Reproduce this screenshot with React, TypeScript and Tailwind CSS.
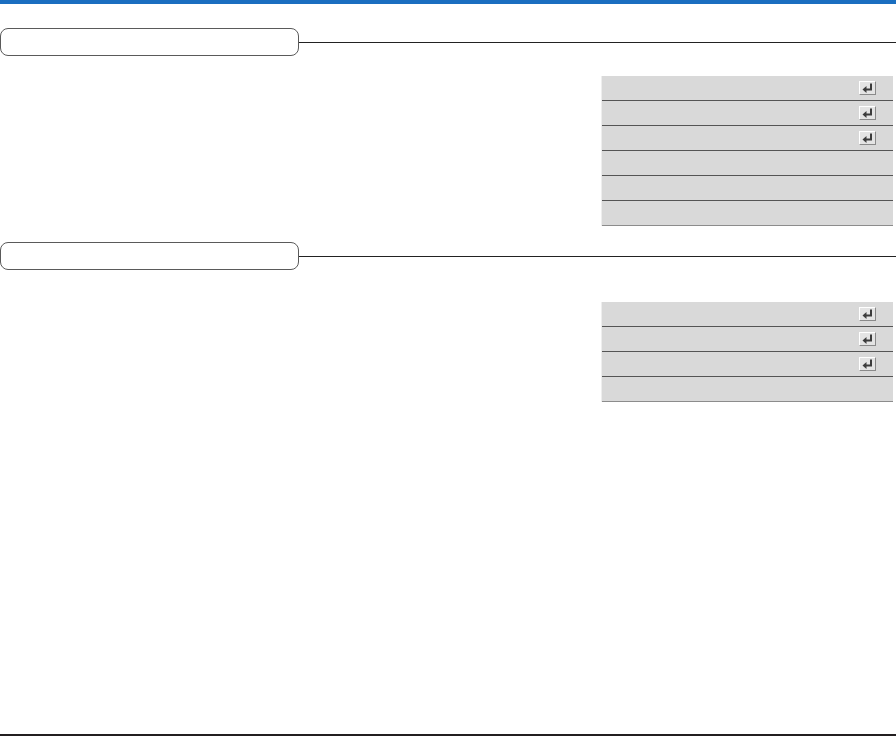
import React from "react";

function EnterIcon() {
  return (
    <div className="w-[17px] h-[14px] bg-[#e4e4e4] border-t border-l border-t-white border-l-white border-b border-r border-b-[#8a8a8a] border-r-[#8a8a8a] flex items-center justify-center">
      <svg width="12" height="10" viewBox="0 0 12 10">
        <path d="M9 0.5 V6.5 H4" stroke="#3c3c3c" strokeWidth="2" fill="none" />
        <path d="M0.5 6.5 L4.5 3 V10 Z" fill="#3c3c3c" />
      </svg>
    </div>
  );
}

function SectionHeader() {
  return (
    <div className="flex items-center h-[28px]">
      <div className="w-[299px] h-[28px] rounded-[8px] border-[1.5px] border-[#5a5a5a] bg-white shrink-0" />
      <div className="flex-1 h-px bg-[#222]" />
    </div>
  );
}

function Panel({ rows }: { rows: boolean[] }) {
  return (
    <div className="ml-[601px] w-[292px] flex flex-col border-l border-l-[#eeeeee]">
      {rows.map((icon, i) => (
        <div
          key={i}
          className={
            "h-[25px] bg-[#d9d9d9] flex items-center justify-end pr-[17px] border-b " +
            (i === rows.length - 1 ? "border-b-[#8c8c8c]" : "border-b-[#555555]")
          }
        >
          {icon ? <EnterIcon /> : null}
        </div>
      ))}
    </div>
  );
}

export default function App() {
  return (
    <div className="w-[896px] h-[737px] bg-white flex flex-col" style={{ fontFamily: '"Liberation Sans", sans-serif' }}>
      <div className="h-[4px] bg-[#1a6ec0]" />
      <div className="mt-[24px]">
        <SectionHeader />
      </div>
      <div className="mt-[20px]">
        <Panel rows={[true, true, true, false, false, false]} />
      </div>
      <div className="mt-[16px]">
        <SectionHeader />
      </div>
      <div className="mt-[32px]">
        <Panel rows={[true, true, true, false]} />
      </div>
      <div className="flex-1" />
      <div className="h-[2px] bg-[#231f20] mb-[1px]" />
    </div>
  );
}
